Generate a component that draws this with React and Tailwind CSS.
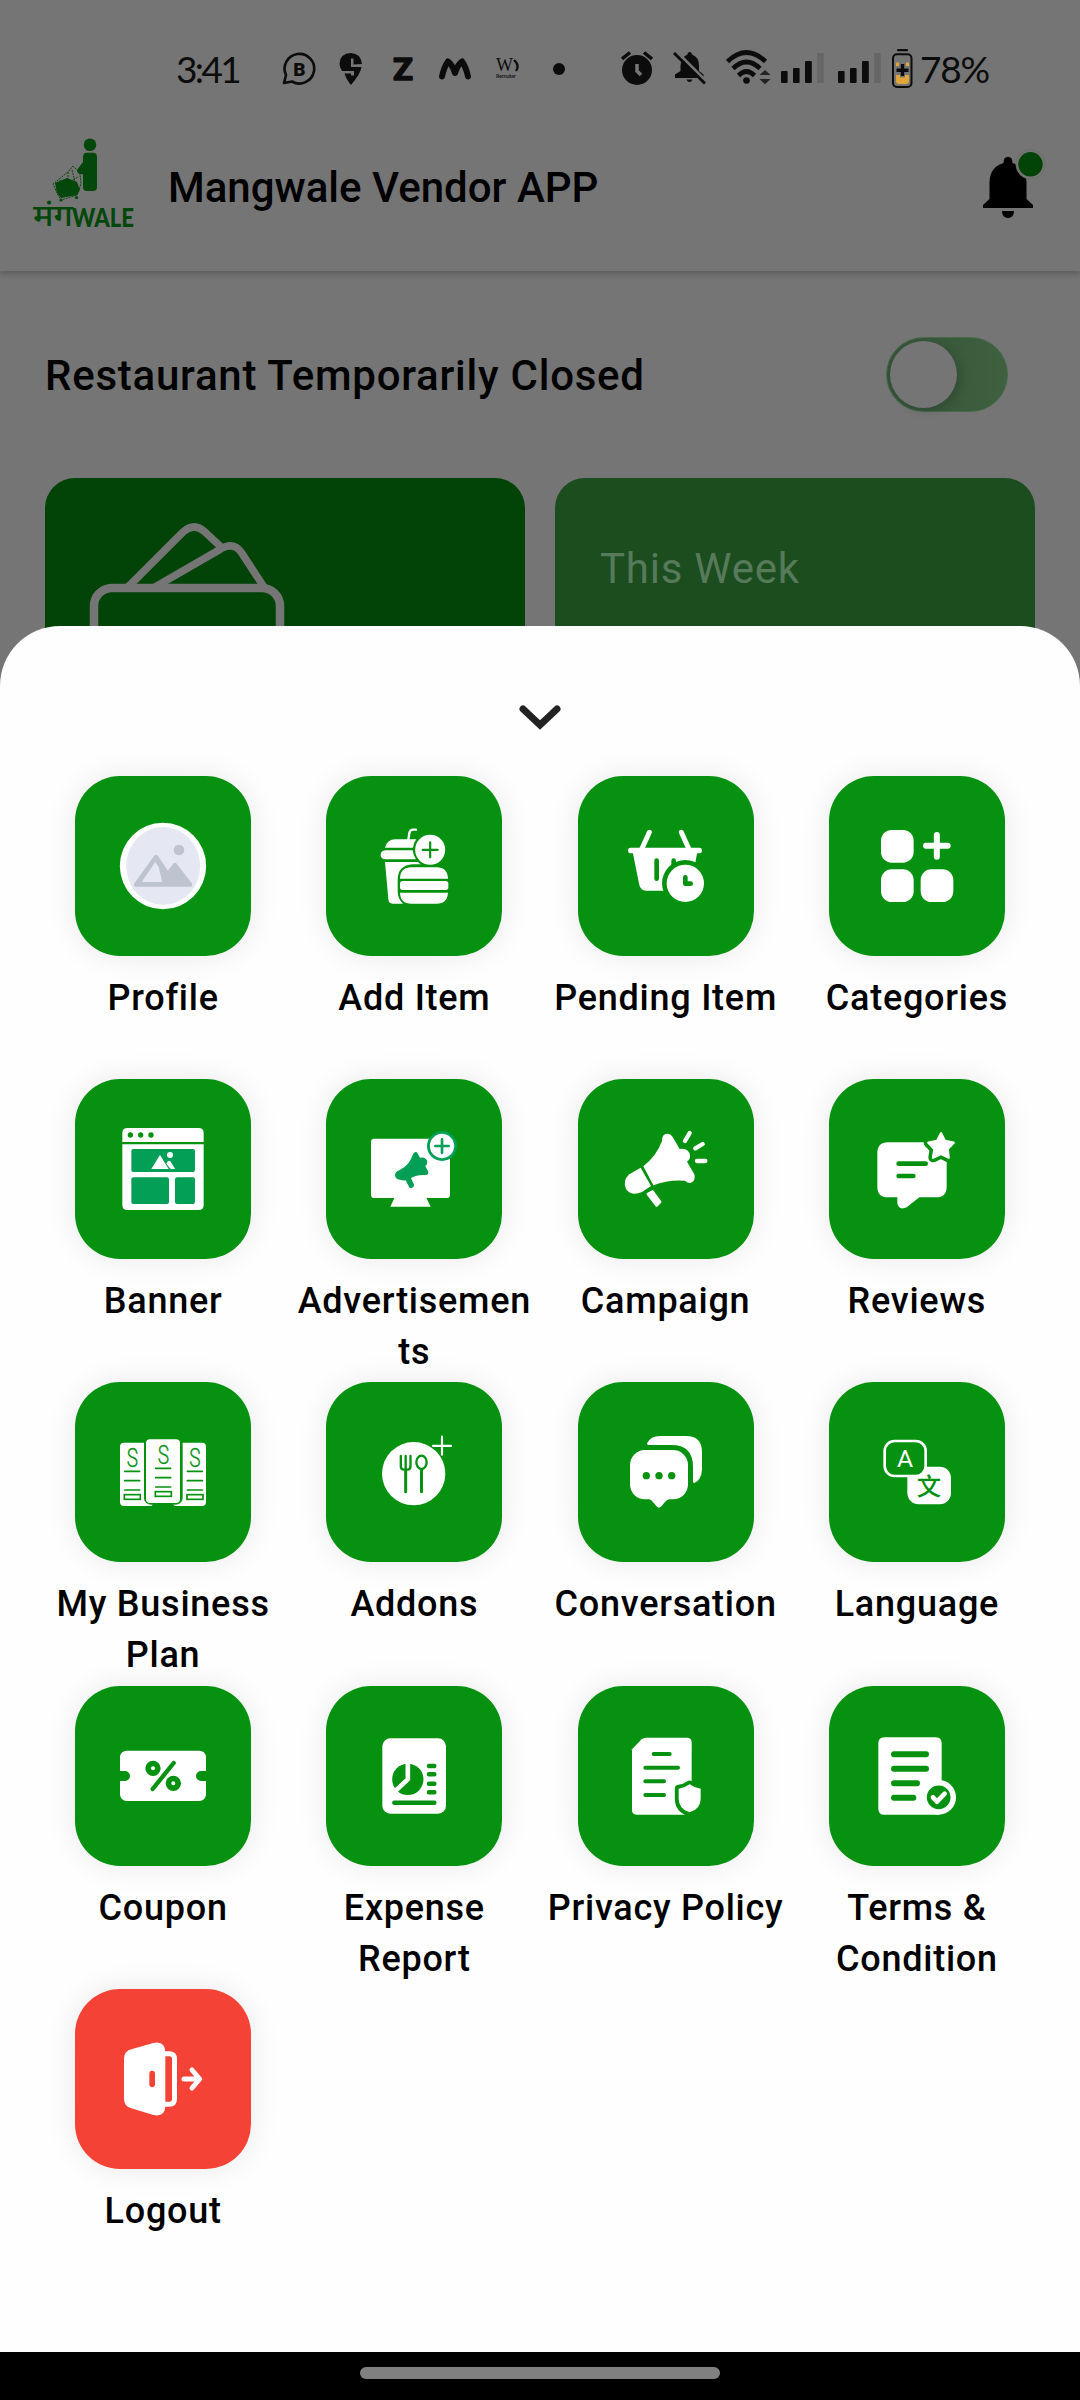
const G = "#069110";
const TEAL = "#049f57";
const INK = "#0c0c0c";

function ProfileIcon() {
  return (
    <svg viewBox="189 168 300 300" className="size-[100px]">
      <circle cx="339" cy="318" r="129.500" fill="#fff" />
      <ellipse cx="339.500" cy="318" rx="111" ry="117" fill="#e5e8f2" />
      <path
        d="M318 291 L258 374 H420 L375 315 L353 343 Z"
        fill="#bdc4cf"
        stroke="#bdc4cf"
        strokeWidth="13"
        strokeLinejoin="round"
      />
      <path d="M316 306 L275 366 H337 L326 322 Z" fill="#e5e8f2" />
      <circle cx="387" cy="270" r="16" fill="#bdc4cf" />
    </svg>
  );
}

function AddItemIcon() {
  return (
    <svg viewBox="942 168 300 300" className="size-[100px]" fill="#fff">
      <path d="M1075 240 L1078 219 Q1080 209 1090 209 H1098" fill="none" stroke="#fff" strokeWidth="7" strokeLinecap="round" />
      <path d="M1005 263 Q1012 238 1036 238 H1099 Q1089 250 1089 263 Z" />
      <path d="M1006 271 H1088 Q1090 287 1098 298 H1006 Q992 297 992 284 Q993 272 1006 271 Z" />
      <path d="M1005 306 H1104 Q1108 311 1114 313 H1088 Q1043 316 1043 360 V392 Q1043 416 1059 431 H1028 Q1016 431 1015 418 Z" />
      <circle cx="1140.500" cy="269.500" r="45" />
      <path d="M1118 269.500 H1163 M1140.500 247 V292" stroke={G} strokeWidth="6.500" strokeLinecap="round" />
      <path d="M1050 356 Q1051 322 1084 322 H1160 Q1192 322 1194 356 Z" />
      <rect x="1050" y="363" width="145" height="27" rx="8" />
      <path d="M1050 398 H1194 Q1192 431 1160 431 H1084 Q1051 431 1050 398 Z" />
    </svg>
  );
}

function PendingItemIcon() {
  return (
    <svg viewBox="198 168 300 300" className="size-[100px]" fill="#fff">
      <path d="M298 217 L274 270 M394 217 L418 270" stroke="#fff" strokeWidth="15" strokeLinecap="round" />
      <rect x="234" y="263" width="222" height="17" rx="8.500" />
      <path d="M248 276 H442 L422 380 Q418 392 405 392 H288 Q272 392 268 375 Z" />
      <path d="M320 302 V356 M371 302 V330" stroke={G} strokeWidth="14" strokeLinecap="round" />
      <circle cx="406" cy="370" r="70" fill={G} />
      <circle cx="406" cy="370" r="56" />
      <path d="M406 352 V371 H422" fill="none" stroke={G} strokeWidth="14" strokeLinecap="round" strokeLinejoin="round" />
    </svg>
  );
}

function CategoriesIcon() {
  return (
    <svg viewBox="951 168 300 300" className="size-[100px]" fill="#fff">
      <rect x="993" y="210" width="98" height="98" rx="32" />
      <rect x="993" y="328" width="98" height="98" rx="32" />
      <rect x="1112" y="328" width="98" height="98" rx="32" />
      <path d="M1128 257.500 H1193 M1160.500 225 V290" stroke="#fff" strokeWidth="18" strokeLinecap="round" />
    </svg>
  );
}

function BannerIcon() {
  return (
    <svg viewBox="189 177 300 300" className="size-[100px]" fill="#fff">
      <path d="M217 246 V219 Q217 204 232 204 H446 Q461 204 461 219 V246 Z" />
      <path d="M217 253 H461 V435 Q461 450 446 450 H232 Q217 450 217 435 Z" />
      <g fill={G}>
        <circle cx="241" cy="225" r="8" />
        <circle cx="272" cy="225" r="8" />
        <circle cx="303" cy="225" r="8" />
      </g>
      <g fill={TEAL}>
        <rect x="244" y="267" width="191" height="69" rx="6" />
        <rect x="244" y="352" width="113" height="80" rx="6" />
        <rect x="375" y="352" width="60" height="80" rx="6" />
      </g>
      <path d="M304 327 L330 285 L356 327 Z" />
      <circle cx="360" cy="285" r="9" />
      <path d="M354 303 H361 L375 327 H362 L349 311 Z" />
    </svg>
  );
}

function AdvertisementsIcon() {
  return (
    <svg viewBox="942 177 300 300" className="size-[100px]" fill="#fff">
      <rect x="963" y="236" width="237" height="178" rx="10" />
      <path d="M1034 412 L1021 440 H1142 L1128 412 Z" />
      <path
        d="M1035 346 Q1035 335 1048 331 Q1078 316 1088 285 Q1092 273 1101 277 L1110 293 Q1128 290 1132 304 Q1133 313 1126 319 L1135 335 Q1136 346 1124 345 Q1100 344 1083 354 L1092 374 Q1093 383 1082 384 Q1079 384 1077 380 L1067 361 Q1058 362 1050 359 Q1035 358 1035 346 Z"
        fill={TEAL}
      />
      <circle cx="1176" cy="258" r="45" fill={TEAL} />
      <circle cx="1176" cy="258" r="36.500" />
      <path d="M1156 258 H1196 M1176 238 V278" stroke={TEAL} strokeWidth="8" strokeLinecap="round" />
    </svg>
  );
}

function CampaignIcon() {
  return (
    <svg viewBox="198 177 300 300" className="size-[100px]" fill="#fff">
      <path d="M238 343 L272 323 L303 378 L276 396 Q243 410 228 387 Q217 362 238 343 Z" />
      <path d="M280 319 Q320 287 336 243 Q335 222 352 221 Q362 221 368 231 L389 267 Q409 263 418 278 Q425 294 411 305 L433 343 Q438 362 422 369 Q412 370 405 362 Q355 358 310 376 Z" />
      <path d="M293 402 L308 394 L331 426 L320 437 Z" stroke="#fff" strokeWidth="7" strokeLinejoin="round" />
      <path d="M419 219 L405 243 M458 252 L436 265 M441 303 H466" stroke="#fff" strokeWidth="13" strokeLinecap="round" />
    </svg>
  );
}

function ReviewsIcon() {
  const star = "1173,220 1185,243 1211,248 1193,267 1196,293 1173,282 1149,293 1153,267 1135,248 1161,243";
  return (
    <svg viewBox="951 177 300 300" className="size-[100px]" fill="#fff">
      <path d="M1014 247 H1158 L1190 290 V380 Q1190 412 1158 412 H1108 L1070 442 Q1046 452 1042 430 V412 H1014 Q982 412 982 380 V280 Q982 247 1014 247 Z" />
      <polygon points={star} fill={G} stroke={G} strokeWidth="28" strokeLinejoin="round" />
      <polygon points={star} stroke="#fff" strokeWidth="7" strokeLinejoin="round" />
      <path d="M1046 311 H1127 M1046 348 H1090" stroke={G} strokeWidth="14" strokeLinecap="round" />
    </svg>
  );
}

function PlanColumn({ x, y }) {
  return (
    <g transform={`translate(${x} ${y})`} fill="none" stroke={G} strokeWidth="5">
      <text
        x="8"
        y="56"
        fontFamily="Roboto, sans-serif"
        fontWeight="300"
        fontSize="76"
        textLength="34"
        lengthAdjust="spacingAndGlyphs"
        fill={G}
        strokeWidth="1"
      >
        S
      </text>
      <path d="M2 68 H47 M2 96 H47 M2 124 H47" strokeLinecap="round" />
      <rect x="1" y="138" width="48" height="14" />
    </g>
  );
}

function BusinessPlanIcon() {
  return (
    <svg viewBox="189 156 300 300" className="size-[100px]" fill="#fff">
      <path d="M222 218 H282 V386 Q284 404 308 404 L304 408 H222 Q210 408 210 396 V230 Q210 218 222 218 Z" />
      <path d="M456 218 H398 V386 Q396 404 370 404 L374 408 H456 Q468 408 468 396 V230 Q468 218 456 218 Z" />
      <rect x="288" y="208" width="102" height="191" rx="12" />
      <PlanColumn x={222} y={236} />
      <PlanColumn x={315} y={227} />
      <PlanColumn x={410} y={236} />
    </svg>
  );
}

function AddonsIcon() {
  return (
    <svg viewBox="942 156 300 300" className="size-[100px]" fill="#fff">
      <circle cx="1091" cy="311" r="95" />
      <path d="M1176 198 V256 M1147 227.500 H1205" stroke={G} strokeWidth="10" />
      <path d="M1176 200 V254 M1149 227.500 H1203" stroke="#fff" strokeWidth="6.500" strokeLinecap="round" />
      <g fill="none" stroke={G} strokeWidth="7" strokeLinecap="round">
        <path d="M1052.500 258 V290 Q1053 299 1062 299 H1072 Q1081 299 1081.500 290 V258 M1067 258 V299" />
        <ellipse cx="1114.500" cy="277" rx="15.500" ry="20" />
        <path d="M1067 300 V365 M1114.500 300 V365" strokeWidth="9" />
      </g>
    </svg>
  );
}

function ConversationIcon() {
  return (
    <svg viewBox="198 156 300 300" className="size-[100px]" fill="#fff">
      <rect x="240" y="240" width="174" height="148" rx="45" />
      <path d="M296 386 Q304 388 317 406 Q327 420 337 406 Q349 388 360 386 Z" />
      <path d="M291 220 Q302 198 330 198 H408 Q456 198 456 246 V298 Q455 330 433 339 Q429 340 429 334 V290 Q429 225 364 225 H296 Q290 225 291 220 Z" />
      <g fill={G}>
        <circle cx="289" cy="317" r="11" />
        <circle cx="327" cy="317" r="11" />
        <circle cx="365" cy="317" r="11" />
      </g>
    </svg>
  );
}

function LanguageIcon() {
  return (
    <svg viewBox="951 156 300 300" className="size-[100px]" fill="#fff">
      <rect x="1072" y="290" width="131" height="113" rx="34" />
      <rect x="1004" y="213" width="123" height="105" rx="30" fill={G} stroke="#fff" strokeWidth="8" />
      <text x="1065.500" y="292" textAnchor="middle" fontFamily="Roboto, sans-serif" fontWeight="400" fontSize="74">
        A
      </text>
      <text x="1137" y="374" textAnchor="middle" fontFamily="'Noto Sans CJK SC', sans-serif" fontWeight="500" fontSize="73" fill={G}>
        文
      </text>
    </svg>
  );
}

function CouponIcon() {
  return (
    <svg viewBox="189 168 300 300" className="size-[100px]" fill="#fff">
      <rect x="210" y="242" width="258" height="151" rx="20" />
      <path d="M204 318 H225 M453 318 H474" stroke={G} strokeWidth="30" strokeLinecap="round" />
      <g fill="none" stroke={G}>
        <circle cx="309" cy="295" r="14.500" strokeWidth="17" />
        <circle cx="370" cy="340" r="14.500" strokeWidth="17" />
        <path d="M371 279 L308 357" strokeWidth="13" strokeLinecap="round" />
      </g>
    </svg>
  );
}

function ExpenseReportIcon() {
  return (
    <svg viewBox="942 168 300 300" className="size-[100px]" fill="#fff">
      <rect x="997" y="205" width="191" height="226" rx="24" />
      <circle cx="1073.500" cy="328" r="47" fill={G} />
      <path d="M1073.500 276 V328 L1036 363" fill="none" stroke="#fff" strokeWidth="14" />
      <path
        d="M1137 288 H1153 M1137 313 H1153 M1137 341 H1153 M1137 367 H1153 M1033 398 H1153"
        stroke={G}
        strokeWidth="13.500"
        strokeLinecap="round"
      />
    </svg>
  );
}

function PrivacyIcon() {
  const shield = "M419 343 Q434 354 452 356 V386 Q452 417 419 427 Q386 417 386 386 V356 Q404 354 419 343 Z";
  return (
    <svg viewBox="198 168 300 300" className="size-[100px]" fill="#fff">
      <path d="M246 238 L275 208 Q280 203 288 203 H411 Q425 203 425 217 V390 L404 434 H260 Q246 434 246 420 Z" />
      <path d={shield} fill={G} stroke={G} strokeWidth="23" strokeLinejoin="round" />
      <path d={shield} />
      <path d="M311 252 H359 M286 293.500 H384 M286 334 H342 M286 375 H342" stroke={G} strokeWidth="12" strokeLinecap="round" />
    </svg>
  );
}

function TermsIcon() {
  return (
    <svg viewBox="951 168 300 300" className="size-[100px]" fill="#fff">
      <path d="M1003 202 H1157 Q1175 202 1175 220 V382 L1166 434 H1003 Q985 434 985 416 V220 Q985 202 1003 202 Z" />
      <circle cx="1166" cy="382" r="52" />
      <circle cx="1166" cy="382" r="35.500" fill={G} />
      <path d="M1149 382 L1161 395 L1184 371" fill="none" stroke="#fff" strokeWidth="14" strokeLinecap="round" strokeLinejoin="round" />
      <path
        d="M1032 253 H1128 M1032 296.500 H1128 M1032 340 H1101 M1032 383 H1090"
        stroke={G}
        strokeWidth="18"
        strokeLinecap="round"
      />
    </svg>
  );
}

function LogoutIcon() {
  return (
    <svg viewBox="189 177 300 300" className="size-[100px]" fill="#fff">
      <path d="M222 266 Q222 244 244 238 L310 219 Q346 212 346 248 V406 Q346 442 310 435 L244 415 Q222 409 222 387 Z" />
      <path d="M306.500 311 V343" stroke="#f44336" strokeWidth="17" strokeLinecap="round" />
      <path d="M344 251 H358 Q373.500 251 373.500 267 V387 Q373.500 402.500 358 402.500 H344" fill="none" stroke="#fff" strokeWidth="15" />
      <path
        d="M402 327 H446 M426 300 L449 327 L426 354"
        fill="none"
        stroke="#fff"
        strokeWidth="15"
        strokeLinecap="round"
        strokeLinejoin="round"
      />
    </svg>
  );
}

const menuItems = [
  { label: "Profile", icon: ProfileIcon },
  { label: "Add Item", icon: AddItemIcon },
  { label: "Pending Item", icon: PendingItemIcon },
  { label: "Categories", icon: CategoriesIcon },
  { label: "Banner", icon: BannerIcon },
  { label: "Advertisements", icon: AdvertisementsIcon },
  { label: "Campaign", icon: CampaignIcon },
  { label: "Reviews", icon: ReviewsIcon },
  { label: "My Business Plan", icon: BusinessPlanIcon },
  { label: "Addons", icon: AddonsIcon },
  { label: "Conversation", icon: ConversationIcon },
  { label: "Language", icon: LanguageIcon },
  { label: "Coupon", icon: CouponIcon },
  { label: "Expense Report", icon: ExpenseReportIcon },
  { label: "Privacy Policy", icon: PrivacyIcon },
  { label: "Terms & Condition", icon: TermsIcon },
  { label: "Logout", icon: LogoutIcon, danger: true },
];

function SignalBars() {
  return (
    <svg viewBox="0 0 43 40" className="h-10 w-[43px]" fill={INK}>
      <rect x="0" y="22" width="6.600" height="12" rx="1" />
      <rect x="12" y="19" width="6.600" height="15" rx="1" />
      <rect x="24" y="12" width="6.800" height="22" rx="1" />
      <rect x="36.200" y="4" width="6.600" height="30" rx="1" fill="#666" />
    </svg>
  );
}

function StatusBar() {
  return (
    <div className="flex h-[103px] items-center pt-[35px] pl-[176px] text-[#0c0c0c]">
      <span className="w-[62px] font-[Lato] text-[37px] leading-10 tracking-[-2.6px] whitespace-nowrap">3:41</span>
      <svg viewBox="282 49 34 40" className="ml-11 h-10 w-[34px]">
        <path
          d="M284 83 L286 75 A14.800 14.800 0 1 1 292 81.500 Z"
          fill="none"
          stroke={INK}
          strokeWidth="2.600"
          strokeLinejoin="round"
        />
        <text x="299.500" y="75.500" textAnchor="middle" fontFamily="Roboto, sans-serif" fontWeight="900" fontSize="19" fill={INK}>
          B
        </text>
      </svg>
      <svg viewBox="339 49 23 40" className="ml-[23px] h-10 w-[23px]">
        <path
          d="M351 85 Q346 79 344.500 73.500 H351 V75.500 H354 V71 H342 Q339.500 67 339.500 63.500 Q340 53.500 351 53 Q361 53.500 362 64 L353.500 64.500 V58.500 H351 V67 H361.500 Q361 73 351 85 Z"
          fill={INK}
        />
      </svg>
      <svg viewBox="392 49 22 40" className="ml-[30px] h-10 w-[22px]">
        <text
          x="393"
          y="80"
          fontFamily="Roboto, sans-serif"
          fontWeight="700"
          fontSize="32"
          textLength="20"
          lengthAdjust="spacingAndGlyphs"
          fill={INK}
          stroke={INK}
          strokeWidth="1.500"
          strokeLinejoin="round"
        >
          Z
        </text>
      </svg>
      <svg viewBox="439 49 32 40" className="ml-[25px] h-10 w-8">
        <path
          d="M442 76.500 Q444 67 448 61.500 Q452 64 455 73 Q458 64 462 61.500 Q466 67 468 76.500"
          fill="none"
          stroke={INK}
          strokeWidth="6"
          strokeLinecap="round"
          strokeLinejoin="round"
        />
      </svg>
      <svg viewBox="495 49 25 40" className="ml-6 h-10 w-[25px]" fill={INK}>
        <text x="496" y="71" fontFamily="Liberation Serif, serif" fontSize="19" textLength="17" lengthAdjust="spacingAndGlyphs">
          W
        </text>
        <path d="M514 60 Q520 65 516 71" fill="none" stroke={INK} strokeWidth="2.200" />
        <text x="496" y="78" fontFamily="Open Sans, sans-serif" fontWeight="600" fontSize="5" textLength="20">
          Recruiter
        </text>
      </svg>
      <span className="ml-[33px] size-3 rounded-full bg-[#0c0c0c]" />
      <svg viewBox="621 49 32 40" className="ml-14 h-10 w-8">
        <circle cx="637" cy="70" r="15" fill={INK} />
        <path d="M622 59 L630 52.500 M652 59 L644 52.500" stroke={INK} strokeWidth="3.500" />
        <path d="M637 64 V71 L641 75" fill="none" stroke="#757575" strokeWidth="3.600" />
      </svg>
      <svg viewBox="673 49 33 40" className="ml-5 h-10 w-[33px]">
        <path
          d="M675 78 V74.500 L680.500 71 V66 Q681 57 687.500 54.500 Q687.500 52 690 52 Q692 52 692 54.500 Q699 57 699 66 V71 L703.500 74.500 V78 Z M686.500 79.500 H692.500 Q691.500 82 689.500 82 Q687.500 82 686.500 79.500 Z"
          fill={INK}
        />
        <path d="M676.500 51.500 L707 82" stroke="#757575" strokeWidth="3" />
        <path d="M674 53 L705 83.500" stroke={INK} strokeWidth="3" />
      </svg>
      <svg viewBox="726 49 45 40" className="ml-5 h-10 w-[45px]">
        <g fill="none" stroke={INK} strokeWidth="4.600">
          <path d="M727.500 61.500 Q746.500 43.500 765.500 61.500" />
          <path d="M733 68.500 Q746.500 55.500 760 68.500" />
          <path d="M738.500 75.500 Q746.500 67.500 754.500 75.500" />
        </g>
        <circle cx="746.500" cy="80.500" r="3.300" fill={INK} />
        <path d="M765 70 L770.500 75 H759.500 Z M759.500 79 H770.500 L765 84.300 Z" fill="#222" />
      </svg>
      <div className="ml-2.5 flex gap-3.5">
        <SignalBars />
        <SignalBars />
      </div>
      <svg viewBox="892 49 21 40" className="ml-[11px] h-10 w-[21px]">
        <rect x="897" y="49" width="11" height="2.200" rx="1" fill={INK} />
        <rect x="893" y="54.300" width="18.500" height="32.700" rx="4" fill="none" stroke={INK} strokeWidth="2" />
        <path d="M896 62.500 H899 V66 H896 Z M906 62.500 H909 V66 H906 Z M896 75 H900 V77.500 H905 V75 H909 V81 Q909 84 906 84 H899 Q896 84 896 81 Z" fill="#e0a63a" />
        <path d="M902.500 64 V76 M896.500 70.200 H908.500" stroke={INK} strokeWidth="3.400" />
      </svg>
      <span className="ml-[7px] font-[Lato] text-[37px] leading-10 tracking-[-1.2px]">78%</span>
    </div>
  );
}

function BrandLogo() {
  return (
    <svg viewBox="33 137 103 100" className="h-[100px] w-[103px] overflow-visible" fill="#04470a">
      <circle cx="90" cy="144.700" r="6.300" />
      <path d="M83 157 Q83 152.700 87 152.700 H93 Q97 152.700 97 157 V187 Q97 191 93 191 H87 Q83 191 83 187 V174 Q77 175 77 170 L83 162 Z" />
      <path d="M55 183 L67 178 L77 182 L80 190 L77 195 L61 198 L57 193 Z" />
      <path
        d="M78 171 L73 166 L68 172 L53 184 L58 195 L61 200 L77 195 L81 184 L80 174 M55 190 L78 177 M60 180 L64 195 M68 172 V190 M72 170 L77 190"
        fill="none"
        stroke="#04470a"
        strokeWidth="1"
        strokeDasharray="2 1"
      />
      <circle cx="61" cy="200" r="1.600" />
      <circle cx="76.500" cy="197.500" r="1.600" />
      <text x="33" y="226" fontFamily="'Noto Sans Devanagari', 'Noto Sans', sans-serif" fontWeight="500" fontSize="31" textLength="40" lengthAdjust="spacingAndGlyphs">
        मंग
      </text>
      <text
        x="72"
        y="226.500"
        fontFamily="Lato, sans-serif"
        fontWeight="900"
        fontSize="27"
        textLength="62"
        lengthAdjust="spacingAndGlyphs"
      >
        WALE
      </text>
    </svg>
  );
}

function AppBar() {
  return (
    <header className="bg-[#757575] shadow-[0_3px_6px_rgba(0,0,0,0.22)]">
      <StatusBar />
      <div className="flex h-42 items-center pr-[34px] pl-[33px]">
        <BrandLogo />
        <h1 className="mt-0.5 ml-8 text-[42px] leading-none font-medium text-black">Mangwale Vendor APP</h1>
        <svg viewBox="980 147 66 80" className="ml-auto h-20 w-[66px]">
          <path d="M983 208 V205 L989.500 199 V182 Q990 167 1003.500 163 Q1003.500 156.700 1008 156.700 Q1012.500 156.700 1012.500 163 Q1026.500 167 1026.500 182 V199 L1033 205 V208 Z" />
          <path d="M1002 211 H1014 Q1014 218 1008 218 Q1002 218 1002 211 Z" />
          <circle cx="1030.500" cy="164.300" r="14.700" fill="#757575" stroke="#5f6f60" strokeWidth="0.600" />
          <circle cx="1030.500" cy="164.300" r="12.200" fill="#024307" />
        </svg>
      </div>
    </header>
  );
}

function WalletIcon() {
  return (
    <svg viewBox="88 518 200 168" className="h-[168px] w-[200px]" fill="none" stroke="#757575" strokeWidth="7.500">
      <path d="M128 587 L183 532 Q194 522 205 532 L221 547" />
      <path d="M155 587 L219 550 Q233 541 241 552 L264 587" />
      <rect x="94" y="588" width="186" height="130" rx="18" strokeWidth="8.500" />
    </svg>
  );
}

function MenuItem({ label, icon: Icon, danger }) {
  return (
    <button type="button" className="flex h-[303.2px] flex-col items-center">
      <span
        className={`flex h-[180px] w-44 items-center justify-center rounded-[45px] shadow-[0_0_30px_rgba(0,0,0,0.09)] ${
          danger ? "bg-[#f44336]" : "bg-[#069110]"
        }`}
      >
        <Icon />
      </span>
      <span className="mt-[17px] w-[240px] text-center text-[36px] leading-[51px] font-medium tracking-[0.75px] break-words text-black">
        {label}
      </span>
    </button>
  );
}

export default function App() {
  return (
    <div className="flex h-[2400px] w-[1080px] flex-col overflow-hidden bg-[#757575] font-[Roboto,sans-serif]">
      <AppBar />

      <main className="h-[415px] px-[45px]">
        <div className="flex h-[207px] items-center justify-between pr-[27px]">
          <p className="mt-0.5 text-[42px] font-medium tracking-[0.75px] text-black">Restaurant Temporarily Closed</p>
          <div className="h-[75px] w-[122px] rounded-full border border-[#46694a] bg-linear-to-r from-[#365239] to-[#3e613f] p-[3px]">
            <div className="size-[67px] rounded-full bg-[#757575] shadow-[4px_3px_10px_rgba(0,0,0,0.15)]" />
          </div>
        </div>

        <div className="grid h-[208px] grid-cols-2 gap-[30px]">
          <div className="overflow-hidden rounded-t-[30px] bg-[#024307] pt-10 pl-[43px]">
            <WalletIcon />
          </div>
          <div className="rounded-t-[30px] bg-[#1b4d1f] px-[45px] pt-[59px]">
            <p className="text-[42px] tracking-[0.75px] text-[#577a5a]">This Week</p>
          </div>
        </div>
      </main>

      <section className="relative -mt-[60px] flex h-[1726px] flex-col items-center rounded-t-[60px] bg-[#fefefe] pt-[79px]">
        <svg viewBox="519 705 42 25" className="h-[25px] w-[42px]">
          <path d="M523 709 L540 725 L557 709" fill="none" stroke="#222" strokeWidth="7" strokeLinecap="round" />
        </svg>
        <div className="mt-[46px] grid w-[1005px] grid-cols-4">
          {menuItems.map((item) => (
            <MenuItem key={item.label} {...item} />
          ))}
        </div>
      </section>

      <nav className="flex h-12 justify-center bg-black pt-[15px]">
        <div className="h-3 w-[360px] rounded-full bg-[#808080]" />
      </nav>
    </div>
  );
}
